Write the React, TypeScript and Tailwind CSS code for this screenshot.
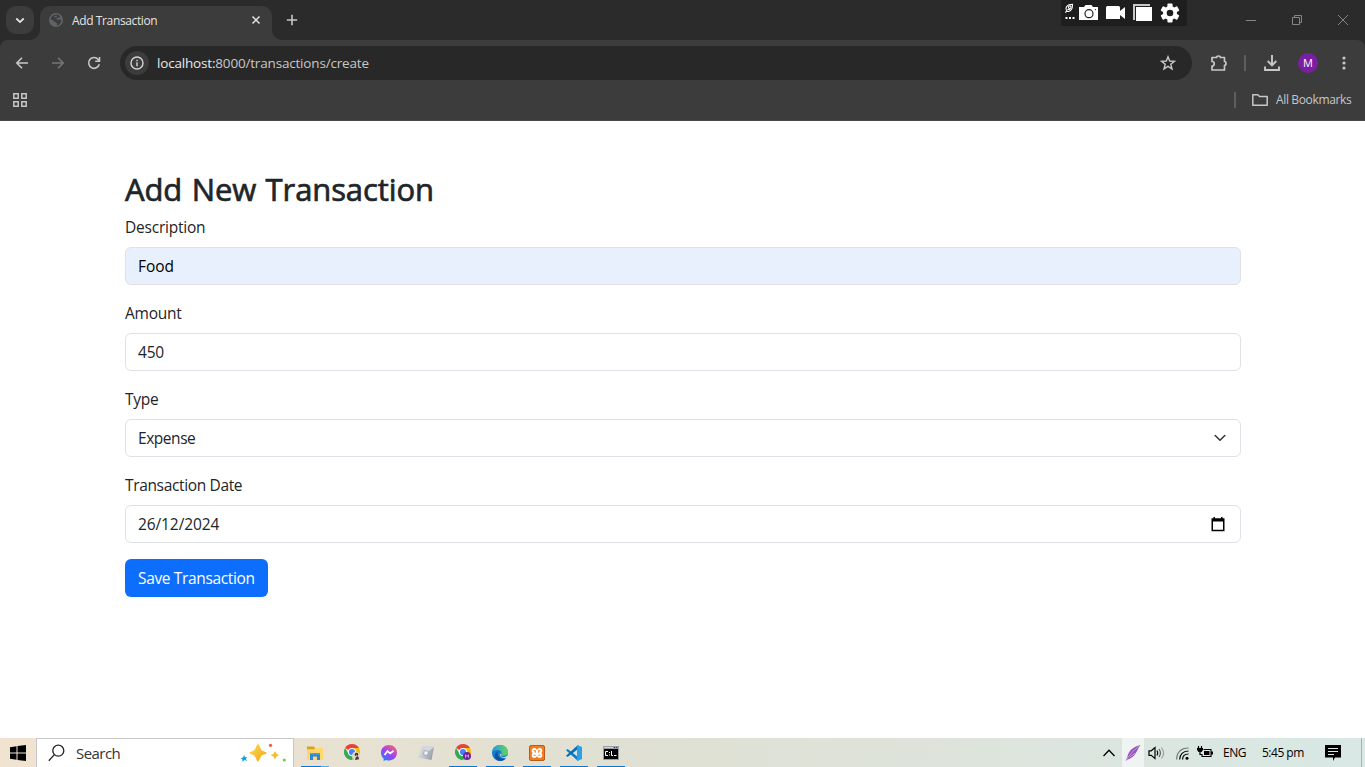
import React from "react";

type IconProps = { className?: string };

const GlobeIcon = () => (
  <svg width="14" height="14" viewBox="0 0 14 14">
    <circle cx="7" cy="7" r="7" fill="#5f6368" />
    <path d="M6.500 1.900C8 1.200 10 1.800 11.200 3.200L10.300 4.600 8 4.800 7.300 6.200 9.500 6.800 11.500 6.500 12.400 7.600A5.600 5.600 0 0 1 7.500 12.500L8.200 10.400 6.800 9.200 4.600 8.600 4 6.900 1.500 6.600A5.600 5.600 0 0 1 4.800 2Z" fill="#3c3c3c" />
    <path d="M5.200 3.200 8.400 2.400 7.600 4 5.400 4.600Z" fill="#5f6368" />
  </svg>
);

const ArrowIcon = ({ className }: IconProps) => (
  <svg width="16" height="16" viewBox="0 0 16 16" fill="none" stroke="currentColor" strokeWidth="1.6" className={className}>
    <path d="M14 8H3M8 2.7 2.8 8 8 13.3" />
  </svg>
);

const ReloadIcon = () => (
  <svg width="16" height="16" viewBox="0 0 16 16" fill="none" stroke="#c7c7c7" strokeWidth="1.6">
    <path d="M13.3 9.3A5.4 5.4 0 1 1 12.2 4.4L13.2 5.6M13.5 2V6.2H9.2" />
  </svg>
);

const CameraToolbar = () => (
  <div className="flex h-[26px] w-[126px] items-center rounded-b-[3px] bg-[#1e1e1e] pl-[3px]">
    <svg width="120" height="24" viewBox="0 0 120 24">
      <g stroke="#fff" fill="none" strokeWidth="1.100">
        <path d="M1.300 11.500 3.200 9.600M2.300 8.800C1.300 7 3 4.500 5 3.800L8.500 3.300 8.200 6.800C7.500 9.200 5 11.200 3.300 10.200Z" />
        <circle cx="5.800" cy="6.200" r="1.300" />
        <path d="M3.500 8.600 6.200 8.200" />
      </g>
      <path d="M1.500 16h2v2h-2zM5 16h2v2H5zM8.500 16h2v2h-2z" fill="#fff" />
      <path d="M15 6H20L21.500 4H27.500L29 6H34V19H15Z" fill="#fff" />
      <circle cx="25" cy="12.700" r="4" fill="#fff" stroke="#1e1e1e" strokeWidth="1.200" />
      <circle cx="31.500" cy="8.600" r=".700" fill="#1e1e1e" />
      <path d="M42 6.500Q42 5 43.500 5H54.500Q56 5 56 6.500V10L61 6V18L56 14V18H42Z" fill="#fff" />
      <path d="M69 3H86V5H71V19H69Z" fill="#c8c8c8" />
      <path d="M72 6H88V20H72Z" fill="#fff" />
      <g transform="translate(106 12)">
        <g fill="#fff">
          <rect x="-2.600" y="-9.500" width="5.200" height="19" rx="1" />
          <rect x="-2.600" y="-9.500" width="5.200" height="19" rx="1" transform="rotate(60)" />
          <rect x="-2.600" y="-9.500" width="5.200" height="19" rx="1" transform="rotate(120)" />
          <circle r="7" />
        </g>
        <circle r="3.300" fill="#1e1e1e" />
      </g>
    </svg>
  </div>
);

function TabStrip() {
  return (
    <header className="flex h-10 bg-[#2b2b2b]">
      <div className="flex w-10 items-start pl-[6px] pt-[6px]">
        <button className="flex h-7 w-7 items-center justify-center rounded-[10px] bg-[#3c3c3c]">
          <svg width="10" height="7" viewBox="0 0 10 7" fill="none" stroke="#e3e3e3" strokeWidth="1.8"><path d="M1.300 1.500 5 5.100 8.700 1.500" /></svg>
        </button>
      </div>
      <div className="relative mt-[6px] flex h-[34px] w-[232px] items-center rounded-t-[10px] bg-[#3c3c3c] pb-[6px] pl-[9px]">
        <svg className="absolute -left-[10px] bottom-0" width="10" height="10"><path d="M10 0V10H0A10 10 0 0 0 10 0Z" fill="#3c3c3c" /></svg>
        <svg className="absolute -right-[10px] bottom-0" width="10" height="10"><path d="M0 0V10H10A10 10 0 0 1 0 0Z" fill="#3c3c3c" /></svg>
        <GlobeIcon />
        <span className="ml-[9px] w-[179px] whitespace-nowrap pt-px text-[12px] tracking-[-0.38px] text-[#e3e3e3]">Add Transaction</span>
        <svg width="10" height="10" viewBox="0 0 10 10" fill="none" stroke="#e3e3e3" strokeWidth="1.500"><path d="M1.500 1.500 8.500 8.500M8.500 1.500 1.500 8.500" /></svg>
      </div>
      <div className="flex w-10 items-center justify-center">
        <svg width="12" height="12" viewBox="0 0 12 12" stroke="#c7c7c7" strokeWidth="1.600"><path d="M6 .800V11.200M.800 6H11.200" /></svg>
      </div>
      <div className="ml-auto mr-[41px] flex items-start"><CameraToolbar /></div>
      <div className="flex w-[137px] items-center pl-[17px] text-[#858585]">
        <svg width="12" height="12" viewBox="0 0 12 12" stroke="currentColor"><path d="M1 6.500H11" /></svg>
        <svg className="ml-[34px]" width="12" height="12" viewBox="0 0 12 12" fill="none" stroke="currentColor"><path d="M1.500 3.500H8.500V10.500H1.500ZM3.500 3.500V1.500H10.500V8.500H8.500" /></svg>
        <svg className="ml-[34px]" width="12" height="12" viewBox="0 0 12 12" stroke="currentColor"><path d="M1 1 11 11M11 1 1 11" /></svg>
      </div>
    </header>
  );
}

function Toolbar() {
  return (
    <div className="flex h-[46px] items-center rounded-t-[8px] bg-[#3c3c3c]">
      <div className="flex w-[120px] items-center gap-5 pl-[14px]">
        <ArrowIcon className="text-[#c7c7c7]" />
        <ArrowIcon className="rotate-180 text-[#757575]" />
        <ReloadIcon />
      </div>
      <div className="flex h-[34px] w-[1072px] items-center rounded-full bg-[#282828] pl-[5px] pr-[16px]">
        <span className="flex h-6 w-6 items-center justify-center rounded-full bg-[#3c3c3c]">
          <svg width="14" height="14" viewBox="0 0 14 14" fill="none" stroke="#d4d4d4" strokeWidth="1.400"><circle cx="7" cy="7" r="6" /><path d="M7 6.200V10.300M7 3.700V5.200" /></svg>
        </span>
        <span className="ml-[8px] whitespace-nowrap pt-px text-[13.500px] tracking-[-0.180px] text-[#c7c7c7]"><span className="text-[#e8e8e8]">localhost:</span>8000/transactions/create</span>
        <svg className="ml-auto" width="16" height="16" viewBox="0 0 16 16" fill="none" stroke="#c7c7c7" strokeWidth="1.400"><path d="M8 1.800 9.700 6 14.400 6.300 10.800 9.300 12 13.900 8 11.400 4 13.900 5.200 9.300 1.600 6.300 6.300 6Z" /></svg>
      </div>
      <svg className="ml-[18px]" width="18" height="18" viewBox="0 0 18 18" fill="none" stroke="#c7c7c7" strokeWidth="1.700" strokeLinejoin="round">
        <path d="M2 3.500H6.600A1.900 1.500 0 0 1 10.400 3.500H14.500V7.500A1.500 1.900 0 0 1 14.500 11.300V16H2V12A2.200 2.200 0 0 0 2 7.500Z" />
      </svg>
      <span className="ml-[16px] h-4 w-[2px] bg-[#5e5e5e]" />
      <svg className="ml-[17px]" width="18" height="18" viewBox="0 0 18 18" fill="none" stroke="#c7c7c7" strokeWidth="1.900"><path d="M9 1V11M4.700 7 9 11.300 13.300 7M2 12.500V16H16V12.500" /></svg>
      <span className="ml-[17px] flex h-5 w-5 items-center justify-center rounded-full bg-[#7b1fa2] text-[11px] text-white">M</span>
      <svg className="ml-[24px]" width="4" height="16" viewBox="0 0 4 16" fill="#c7c7c7"><circle cx="2" cy="3" r="1.600" /><circle cx="2" cy="8" r="1.600" /><circle cx="2" cy="13" r="1.600" /></svg>
    </div>
  );
}

function BookmarksBar() {
  return (
    <div className="flex h-[35px] items-start border-b border-[#494949] bg-[#3c3c3c] pl-[13px] pr-[14px]">
      <div className="flex h-7 w-full items-center">
        <svg width="14" height="14" viewBox="0 0 14 14" fill="none" stroke="#c7c7c7" strokeWidth="1.500"><path d="M.800.800H5.200V5.200H.800ZM8.800.800H13.200V5.200H8.800ZM.800 8.800H5.200V13.200H.800ZM8.800 8.800H13.200V13.200H8.800Z" /></svg>
        <span className="ml-auto h-4 w-[2px] bg-[#5e5e5e]" />
        <svg className="ml-[16px]" width="16" height="12" viewBox="0 0 16 12" fill="none" stroke="#c7c7c7" strokeWidth="1.500" strokeLinejoin="round"><path d="M.800.800H5.800L7.500 2.500H15.200V11.200H.800Z" /></svg>
        <span className="ml-[8px] w-[75px] whitespace-nowrap text-[12px] tracking-[-0.36px] text-[#c7c7c7]">All Bookmarks</span>
      </div>
    </div>
  );
}

type FieldProps = { label: string; value: string; filled?: boolean; icon?: React.ReactNode; labelClass: string; valueClass: string };

function Field({ label, value, filled, icon, labelClass, valueClass }: FieldProps) {
  return (
    <div className="mb-4">
      <div className={`mb-2 h-6 text-[15.500px] leading-6 ${labelClass}`}>{label}</div>
      <div className={`flex h-[38px] items-center justify-between rounded-[6px] border border-[#dee2e6] px-3 text-[15.500px] leading-6 ${filled ? "bg-[#e8f0fe] text-black" : "bg-white"}`}>
        <span className={valueClass}>{value}</span>
        {icon}
      </div>
    </div>
  );
}

function Page() {
  return (
    <main className="flex-1 bg-white pl-[125px] pr-[124px] pt-12 text-[#212529]">
      <h1 className="mb-2 h-[38.400px] whitespace-nowrap pt-px text-[31px] font-normal leading-[38.400px] tracking-[-0.100px] [-webkit-text-stroke:0.700px_#212529] [word-spacing:1.500px]">Add New Transaction</h1>
      <Field label="Description" value="Food" filled labelClass="tracking-[-0.220px]" valueClass="tracking-[-0.050px]" />
      <Field label="Amount" value="450" labelClass="tracking-[-0.250px]" valueClass="tracking-[-0.200px]" />
      <Field
        label="Type"
        value="Expense"
        labelClass="tracking-[-0.250px]"
        valueClass="tracking-[-0.450px]"
        icon={<svg className="mr-[2px]" width="12" height="8" viewBox="0 0 12 8" fill="none" stroke="#343a40" strokeWidth="1.600" strokeLinecap="round" strokeLinejoin="round"><path d="M1.200 1.500 6 6.200 10.800 1.500" /></svg>}
      />
      <Field
        label="Transaction Date"
        value="26/12/2024"
        labelClass="tracking-[-0.350px]"
        valueClass="tracking-[-0.100px]"
        icon={<svg className="mr-[3px]" width="14" height="15" viewBox="0 0 14 15"><path d="M2.500 0H4V1.200H10V0H11.500V1.200H13.500V14.200H.500V1.200H2.500ZM2 4.500V12.800H12V4.500Z" fillRule="evenodd" fill="#000" /></svg>}
      />
      <button className="flex h-[38px] w-[143px] items-center whitespace-nowrap rounded-[6px] bg-[#0d6efd] pl-[13px] text-[15.500px] leading-6 tracking-[-0.350px] text-white">Save Transaction</button>
    </main>
  );
}

const ChromeLogo = ({ badge }: { badge: "person" | "m" }) => (
  <svg width="18" height="18" viewBox="-1 0 18 18" overflow="visible">
    <path d="M8 8 1.070 4A8 8 0 0 1 14.930 4Z" fill="#ea4335" />
    <path d="M8 8V4H14.930A8 8 0 0 1 8 16L11.460 10Z" fill="#fbbc04" />
    <path d="M1.070 4 4.540 10 8 12 11.460 10 8 16A8 8 0 0 1 1.070 4Z" fill="#34a853" />
    <circle cx="8" cy="8" r="4" fill="#fff" />
    <circle cx="8" cy="8" r="3.100" fill="#4285f4" />
    {badge === "m" ? (
      <><circle cx="12" cy="12" r="4" fill="#6f2398" /><path d="M10.500 13.800V10.700L12 12.500 13.500 10.700V13.800" stroke="#d8a3ea" fill="none" strokeWidth=".900" /></>
    ) : (
      <><circle cx="12" cy="12" r="4.200" fill="#ddd8ca" /><circle cx="12.500" cy="10.400" r="1.700" fill="#302822" /><path d="M11.200 16C11.200 11.500 15 11 15 15.300Z" fill="#4a3a31" /><path d="M12 10.500h1.200v2H12z" fill="#c79476" /></>
    )}
  </svg>
);

const apps: { id: string; bar: string; icon: React.ReactNode }[] = [
  {
    id: "explorer", bar: "bg-linear-to-r from-[#0078d7] from-70% to-[#55a9e6] to-70%", icon: (
      <svg width="16" height="16" viewBox="0 0 16 16"><path d="M0 1.500H7L8.200 3.500H16V14H0Z" fill="#dca021" /><path d="M0 4.200H7L8.500 3H16V15H0Z" fill="#ffd76b" /><path d="M3 15V8.500H13V15H10V11.500H6V15Z" fill="#2f86cf" /><path d="M3 8H13V9.500H3Z" fill="#4ca0de" /></svg>
    ),
  },
  { id: "chrome", bar: "", icon: <ChromeLogo badge="person" /> },
  {
    id: "messenger", bar: "", icon: (
      <svg width="16" height="16" viewBox="0 0 16 16">
        <defs><linearGradient id="msg" x1=".100" y1="1" x2=".800" y2="0"><stop stopColor="#1688ff" /><stop offset=".5" stopColor="#9a42f5" /><stop offset="1" stopColor="#ff5f72" /></linearGradient></defs>
        <path d="M8 0C3.400 0 0 3.300 0 7.700 0 10.100 1 12.100 2.600 13.500V15.900L5 14.900A9 9 0 0 0 8 15.400C12.600 15.400 16 12.100 16 7.700S12.600 0 8 0Z" fill="url(#msg)" />
        <path d="M3.500 10 6.500 6.100 9.200 8.400 12.500 5.800" fill="none" stroke="#fff" strokeWidth="1.800" />
      </svg>
    ),
  },
  {
    id: "roblox", bar: "", icon: (
      <svg width="16" height="16" viewBox="0 0 16 16"><defs><linearGradient id="rbx" gradientUnits="userSpaceOnUse" x1="0" y1="4" x2="16" y2="10"><stop stopColor="#dfe3e8" /><stop offset=".5" stopColor="#bcc3ca" /><stop offset="1" stopColor="#929ba5" /></linearGradient></defs><path d="M4.500 1 16 2 13.500 15 0 12.500Z" fill="url(#rbx)" /><path d="M4.500 1 16 2 10.500 6.500 6.500 5.500Z" fill="#d5d9de" /><path d="M6.500 5.500 10.500 6.500 9.500 10.500 5.300 9.500Z" fill="#eef0f2" stroke="#8792a0" strokeWidth=".600" /></svg>
    ),
  },
  { id: "chrome-m", bar: "bg-[#0078d7]", icon: <ChromeLogo badge="m" /> },
  {
    id: "edge", bar: "bg-[#0078d7]", icon: (
      <svg width="16" height="16" viewBox="0 0 16 16">
        <defs><linearGradient id="edg"><stop stopColor="#239be2" /><stop offset="1" stopColor="#66d45b" /></linearGradient></defs>
        <circle cx="8" cy="8" r="8" fill="#147bc9" />
        <path d="M0 7C1 2 4 0 8 0 13 0 16 3.500 16 7 16 10 13.500 11 10.500 11 9 11 8.500 10 9.500 9 10 6 7 4.700 4.500 5.200 2 5.500.500 6.500 0 7Z" fill="url(#edg)" />
        <path d="M5.500 8C5 12 8 14.500 13.500 13.500 11.500 16 7 17 4 14 1.500 11 3 7.500 6.500 6.200Z" fill="#124f9e" />
        <path d="M9.500 8.500C8 10.500 9 12 11.500 12 13.500 12 15 11 15.500 10.200L16 12 14 13.200C10.500 13.500 7.800 11.800 7.800 9.300Z" fill="#e0e0d6" />
      </svg>
    ),
  },
  {
    id: "xampp", bar: "bg-[#0078d7]", icon: (
      <svg width="16" height="16" viewBox="0 0 16 16">
        <rect x=".500" y=".500" width="15" height="15" rx="1.500" fill="#f47c20" stroke="#b75c1b" />
        <path d="M5.300 3C7 3 7.300 4.500 8 4.500S9 3 10.700 3C13.800 3 13.800 7 12.200 8 13.800 9 13.800 13 10.700 13 9 13 8.700 11.500 8 11.500S7 13 5.300 13C2.200 13 2.200 9 3.800 8 2.200 7 2.200 3 5.300 3Z" fill="#fff" />
        <path d="M5 5.700H6.300V7.300M11 5.700H9.700V7.300M5 10.300H6.300M9.700 10.300H11" fill="none" stroke="#f47c20" strokeWidth="1.100" strokeLinecap="round" />
      </svg>
    ),
  },
  {
    id: "vscode", bar: "bg-[#0078d7]", icon: (
      <svg width="16" height="16" viewBox="0 0 16 16"><path d="M0 5.200 1.600 4 12 12V16Z" fill="#087fc6" /><path d="M0 10.800 1.600 12 12 4V0Z" fill="#0870b8" /><path d="M11.500 0 16 2V14L11.500 16 11 15V1Z" fill="#2aa1e8" /></svg>
    ),
  },
  {
    id: "cmd", bar: "bg-[#0078d7]", icon: (
      <svg width="16" height="14" viewBox="0 0 16 14"><path d="M0 0H16V14H0Z" fill="#999da5" /><path d="M1 3H15V13H1Z" fill="#050505" /><path d="M1 1H10V2H1Z" fill="#cfd4dc" /><path d="M11 1h1v1h-1zM13 1h1v1h-1z" fill="#345" /><path d="M5 5.500H2.500V9.500H5M6.500 6v1M6.500 8.500v1M8.500 5V9.500H10M11 9.500H13.500" fill="none" stroke="#fff" /></svg>
    ),
  },
];

function Taskbar() {
  return (
    <footer className="flex h-[29px] bg-linear-to-r from-[#f1e3d0] via-[#e0e0d3] via-45% to-[#d9e8e5]">
      <div className="flex w-9 items-center justify-center">
        <svg width="16" height="16" viewBox="0 0 16 16"><path d="M0 2.300 6.500 1.300V7.500H0ZM7.500 1.100 16 0V7.500H7.500ZM0 8.500H6.500V14.700L0 13.800ZM7.500 8.500H16V16L7.500 14.900Z" /></svg>
      </div>
      <div className="flex w-[258px] items-center border border-b-0 border-[#c7c7c7] bg-white pl-[11px]">
        <svg width="17" height="18" viewBox="0 0 17 18" fill="none" stroke="#222" strokeWidth="1.300"><circle cx="10.300" cy="6.700" r="5.500" /><path d="M6.400 10.600.800 16.700" /></svg>
        <span className="ml-[11px] w-[164px] text-[15px] tracking-[-0.550px] text-[#333]">Search</span>
        <svg width="48" height="20" viewBox="0 0 48 20">
          <defs><linearGradient id="spark" x1="0" y1="0" x2="1" y2="1"><stop stopColor="#ffd84a" /><stop offset="1" stopColor="#efa91c" /></linearGradient></defs>
          <path d="M18 1C19.300 1 20.500 6.500 22 7.500 24 8.500 26.500 8.800 26.500 10S24 11.500 22 12.300C20.500 13.500 19.300 18.500 18 18.500S15.500 13.500 14 12.300C12 11.500 9.500 11.200 9.500 10S12 8.500 14 7.500C15.500 6.500 16.700 1 18 1Z" fill="url(#spark)" />
          <path d="M35 8 36.500 11 39.500 12 36.500 13.500 35 16.500 33.500 13.500 30.500 12 33.500 11Z" fill="#f9bd24" />
          <path d="M4 12 5 14.200 7.200 14 5.800 16 7 18 4.400 17 2.500 19 2.500 16.500.500 15.200 3 14.500Z" fill="#119eea" />
          <circle cx="30.500" cy="2.300" r="1.600" fill="#ef5b30" /><circle cx="44.300" cy="17" r="1.500" fill="#7cc441" />
        </svg>
      </div>
      <nav className="ml-[2px] flex">
        {apps.map((app) => (
          <div key={app.id} className="flex w-[37px] flex-col items-center">
            <div className="flex h-[28px] items-center pt-[2px]">{app.icon}</div>
            <div className={`h-px w-[28px] ${app.bar}`} />
          </div>
        ))}
      </nav>
      <div className="ml-auto flex items-center text-[12px] text-black">
        <svg width="12" height="8" viewBox="0 0 12 8" fill="none" stroke="#000" strokeWidth="1.300"><path d="M.500 7 6 1.300 11.500 7" /></svg>
        <div className="ml-[7px] flex h-full w-[22px] items-center justify-center bg-[#eff4f3]">
          <svg width="16" height="18" viewBox="0 0 16 18"><path d="M15.500 1C9 2.500 3.500 6.500 2.500 12.500L.800 16.500 5 14.500C10.500 12.500 11.500 6.500 15.500 1Z" fill="#9455bd" /><path d="M1 17C4 11 8 6.500 14 2.500M5 13 10 9" fill="none" stroke="#d3ade6" strokeWidth=".800" /></svg>
        </div>
        <svg className="ml-[4px]" width="17" height="14" viewBox="0 0 17 14" fill="none" stroke="#000" strokeWidth="1.200"><path d="M1 4.800H3.200L7 1.500V12.500L3.200 9.300H1Z" /><path d="M9 4.500Q10.500 7 9 9.500" /><path d="M11 3Q13.800 7 11 11" stroke="#5b6261" /><path d="M13.400 1.500Q17.800 7 13.400 12.500" stroke="#9ca5a3" /></svg>
        <svg className="ml-[11px] mt-[2px]" width="13" height="13" viewBox="0 0 13 13" fill="none" stroke="#000" strokeWidth="1.200"><path d="M.700 12.500C.500 5.500 5 1 12.500 1" stroke="#6d7674" /><path d="M3.700 12.500C3.700 7.500 7 4 12.500 4M6.600 12.500C6.600 9 9 7 12.500 7" /><circle cx="11" cy="11.300" r="1.500" fill="#000" stroke="none" /></svg>
        <svg className="ml-[8px]" width="16" height="13" viewBox="0 0 16 13"><path d="M1.500 0V3M4.500 0V3M3 5V8.500H5" stroke="#000" strokeWidth="1.200" fill="none" /><path d="M0 2H6V4L4.500 6H1.500L0 4Z" /><path d="M6.500 3.500H14V10.500H5V8" fill="none" stroke="#000" strokeWidth="1.100" /><path d="M7 5H12.500V9H7ZM14 5.500h2v3h-2z" /></svg>
        <span className="ml-[10px] w-[39px] tracking-[-0.450px]">ENG</span>
        <span className="w-[63px] whitespace-nowrap tracking-[-0.500px]">5:45 pm</span>
        <svg width="16" height="16" viewBox="0 0 16 16"><path d="M0 0H16V12.500H10L8 16V12.500H0Z" /><path d="M3 3.500H13M3 6.500H13M3 9.500H9" stroke="#dbe8e5" /></svg>
        <span className="ml-[20px] mr-[3px] h-full w-px bg-[#a9b3b1]" />
      </div>
    </footer>
  );
}

export default function App() {
  return (
    <div className="flex h-[767px] w-[1365px] flex-col overflow-hidden bg-[#2b2b2b] font-['Open_Sans','Noto_Sans',sans-serif]">
      <TabStrip />
      <Toolbar />
      <BookmarksBar />
      <Page />
      <Taskbar />
    </div>
  );
}
